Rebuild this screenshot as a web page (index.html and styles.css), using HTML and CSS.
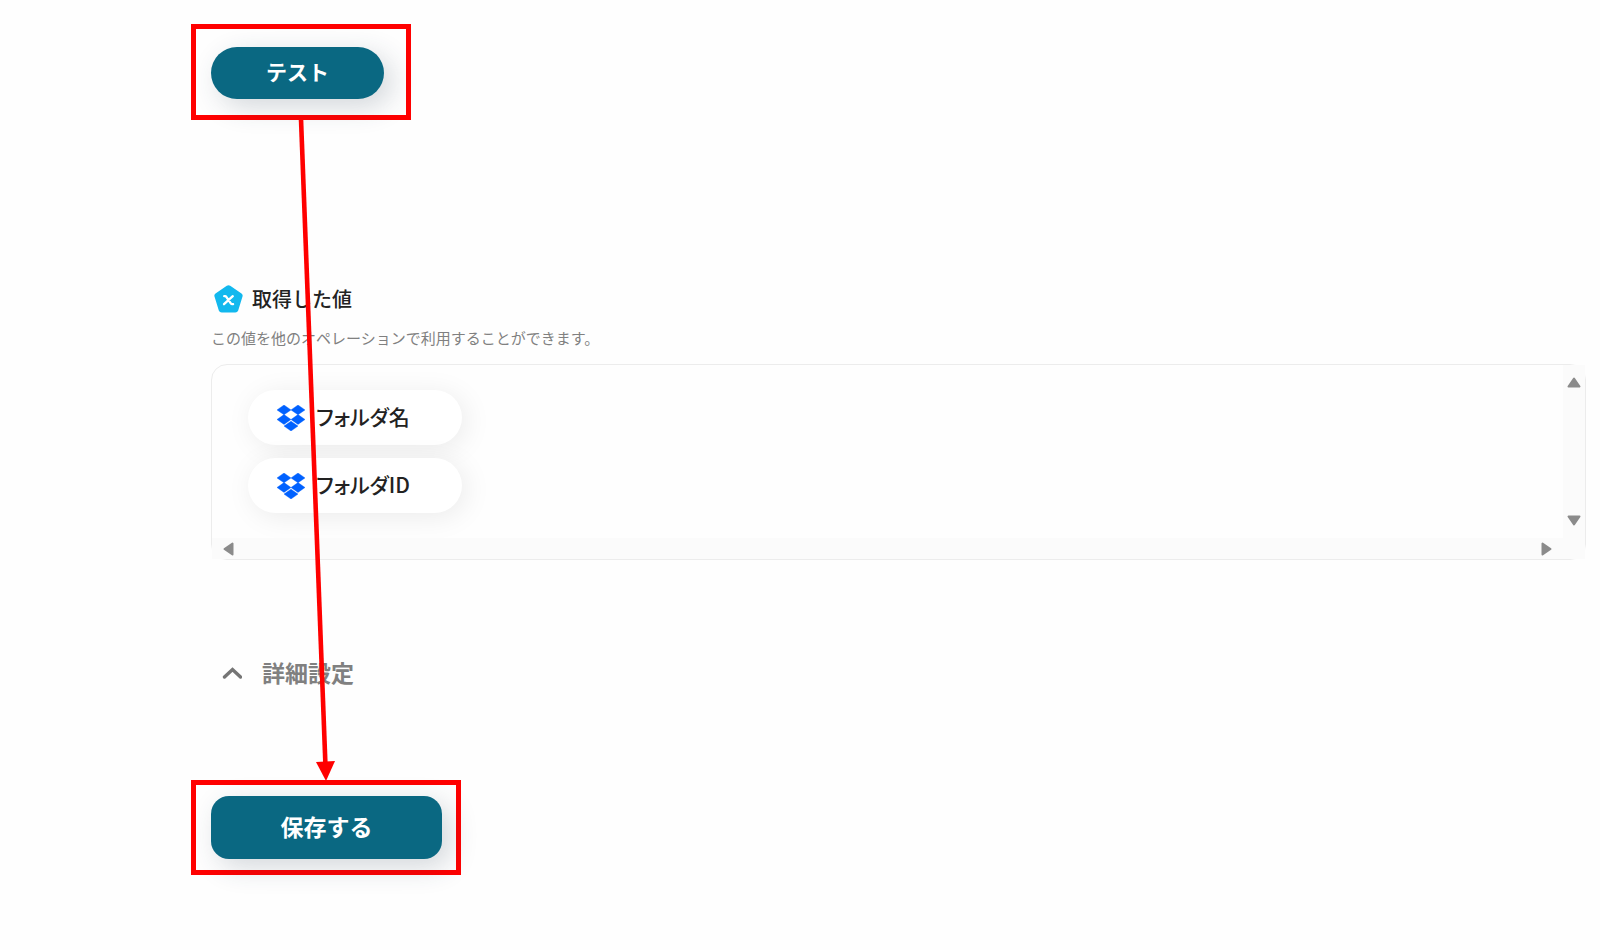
FILE: index.html
```
<!DOCTYPE html>
<html lang="ja">
<head>
    <meta charset="utf-8">
    <title>テスト</title>
    <link rel="stylesheet" href="styles.css">
</head>
<body>
    <svg class="symbols" width="0" height="0" aria-hidden="true">
        <symbol id="dropbox" viewBox="0 0 28 26">
            <path d="M7 0l7 4.900-7 4.900-7-4.900zM21 0l7 4.900-7 4.900-7-4.900zM7 9.600l7 4.900-7 4.900-7-4.900zM21 9.600l7 4.900-7 4.900-7-4.900zM14 16.200l7 4.900-7 4.900-7-4.900z" fill="#0061ff" stroke="#0061ff" stroke-width=".4"/>
        </symbol>
    </svg>

    <main class="page">
        <div class="highlight highlight-test">
            <button type="button" class="btn btn-test">テスト</button>
        </div>

        <section class="values">
            <h2 class="values-title">
                <svg class="values-icon" width="29" height="28" viewBox="0 0 29 28" aria-hidden="true">
                    <path d="M12.8.8q1.7-1.1 3.4 0l11.3 7.7q1.6 1.2 1 3l-4.3 14q-.8 2.1-2.9 2.1H7.700q-2.100 0-2.900-2.100l-4.300-14q-.6-1.800 1-3z" fill="#12b8ee"/>
                    <path d="M10.200 11.200h.8q.9 0 1.500.9l4.300 6.200q.6.900 1.500.9h.8M18.800 11.200L10 19.200" fill="none" stroke="#fff" stroke-width="2.300" stroke-linecap="round"/>
                </svg>
                取得した値
            </h2>
            <p class="values-note">この値を他のオペレーションで利用することができます。</p>

            <div class="panel">
                <div class="panel-body">
                    <button type="button" class="pill">
                        <svg class="pill-icon" width="28" height="26"><use href="#dropbox"/></svg>
                        <span class="pill-label">フォルダ名</span>
                    </button>
                    <button type="button" class="pill">
                        <svg class="pill-icon" width="28" height="26"><use href="#dropbox"/></svg>
                        <span class="pill-label">フォルダID</span>
                    </button>
                </div>
                <div class="scroll scroll-y">
                    <svg width="14" height="11" viewBox="0 0 14 11"><path d="M7 1.500L12.500 9.500H1.500z"/></svg>
                    <svg width="14" height="11" viewBox="0 0 14 11"><path d="M7 9.500L1.500 1.500H12.500z"/></svg>
                </div>
                <div class="scroll scroll-x">
                    <svg width="11" height="14" viewBox="0 0 11 14"><path d="M1.500 7L9.500 1.500V12.500z"/></svg>
                    <svg width="11" height="14" viewBox="0 0 11 14"><path d="M9.500 7L1.500 1.500V12.500z"/></svg>
                </div>
            </div>
        </section>

        <button type="button" class="details">
            <svg width="20" height="14" viewBox="0 0 20 14" aria-hidden="true">
                <path d="M2.500 12L10.500 4.500L18.500 12" fill="none" stroke="#757575" stroke-width="3.400" stroke-linecap="round"/>
            </svg>
            詳細設定
        </button>

        <div class="highlight highlight-save">
            <button type="button" class="btn btn-save">保存する</button>
        </div>

        <!-- arrow from the test button to the save button -->
        <svg class="arrow" width="40" height="662" viewBox="0 0 40 662" aria-hidden="true">
            <path d="M6 0L30.400 645" stroke="#f00" stroke-width="4.600"/>
            <path d="M21 643L40 642L31 662z" fill="#f00"/>
        </svg>
    </main>
</body>
</html>
```
FILE: styles.css
```
* {
    box-sizing: border-box;
}
body {
    margin: 0;
    background-color: #fefefe;
    color: #222;
    font-family: "Noto Sans CJK JP", sans-serif;
}
button {
    font: inherit;
    border: none;
    cursor: pointer;
}
.symbols {
    display: block;
}
.page {
    position: relative;
    display: flex;
    flex-direction: column;
    align-items: flex-start;
    padding: 24px 14px 24px 191px;
}
.highlight {
    border: 5px solid #f00;
}
.highlight-test {
    padding: 18px 22px 16px 15px;
}
.highlight-save {
    padding: 11px 14px 11px 15px;
}
.btn {
    display: block;
    padding: 0 0 4px;
    background-color: #0a6882;
    color: #fff;
    font-weight: 700;
    line-height: 32px;
    box-shadow: 8px 8px 28px rgba(40, 60, 80, 0.2);
}
.btn-test {
    width: 173px;
    height: 52px;
    border-radius: 26px;
    font-size: 21px;
}
.btn-save {
    width: 231px;
    height: 63px;
    border-radius: 18px;
    font-size: 23px;
}
.values {
    align-self: stretch;
    margin-top: 162px;
    padding-left: 20px;
}
.values-title {
    display: flex;
    align-items: center;
    gap: 9px;
    margin: 0;
    padding-left: 3px;
    font-size: 20px;
    font-weight: 500;
    line-height: 34px;
}
.values-note {
    margin: 9px 0 14px;
    color: #808080;
    font-size: 15px;
    line-height: 25px;
}
.panel {
    display: grid;
    grid-template-columns: 1fr 22px;
    grid-template-rows: 1fr 21px;
    border: 1px solid #ececec;
    border-radius: 16px;
}
.panel-body {
    display: flex;
    flex-direction: column;
    align-items: flex-start;
    gap: 13px;
    padding: 25px 36px;
}
.pill {
    display: flex;
    align-items: center;
    gap: 11px;
    width: 214px;
    height: 55px;
    padding: 0 29px;
    border-radius: 28px;
    background-color: #fff;
    color: #222;
    font-size: 21px;
    font-weight: 500;
    font-feature-settings: "palt";
    line-height: 30px;
    white-space: nowrap;
    box-shadow: 4px 4px 28px rgba(0, 0, 0, 0.08);
}
.pill-label {
    padding-bottom: 4px;
}
.scroll {
    display: flex;
    justify-content: space-between;
    align-items: center;
    background-color: #fbfbfb;
}
.scroll path {
    fill: #8b8b8b;
    stroke: #8b8b8b;
    stroke-width: 2;
    stroke-linejoin: round;
}
.scroll-y {
    flex-direction: column;
    padding: 12px 0;
}
.scroll-x {
    grid-column: 1 / 3;
    padding: 0 33px 0 11px;
}
.details {
    display: flex;
    align-items: center;
    gap: 20px;
    margin: 95px 0 91px 31px;
    padding: 0;
    background: none;
    color: #808080;
    font-size: 23px;
    font-weight: 700;
    line-height: 34px;
}
.arrow {
    position: absolute;
    top: 119px;
    left: 295px;
}
```
